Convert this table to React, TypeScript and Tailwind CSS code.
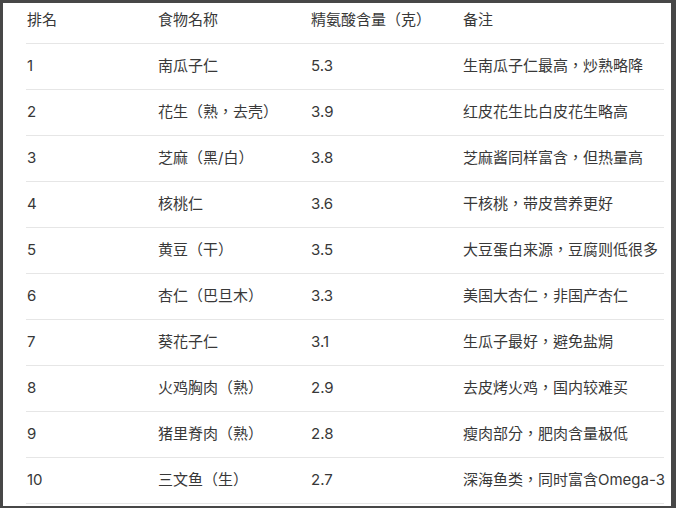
import React from 'react';

const rows = [
  ['1', '南瓜子仁', '5.3', '生南瓜子仁最高，炒熟略降'],
  ['2', '花生（熟，去壳）', '3.9', '红皮花生比白皮花生略高'],
  ['3', '芝麻（黑/白）', '3.8', '芝麻酱同样富含，但热量高'],
  ['4', '核桃仁', '3.6', '干核桃，带皮营养更好'],
  ['5', '黄豆（干）', '3.5', '大豆蛋白来源，豆腐则低很多'],
  ['6', '杏仁（巴旦木）', '3.3', '美国大杏仁，非国产杏仁'],
  ['7', '葵花子仁', '3.1', '生瓜子最好，避免盐焗'],
  ['8', '火鸡胸肉（熟）', '2.9', '去皮烤火鸡，国内较难买'],
  ['9', '猪里脊肉（熟）', '2.8', '瘦肉部分，肥肉含量极低'],
  ['10', '三文鱼（生）', '2.7', '深海鱼类，同时富含Omega-3'],
];

const cols = 'grid grid-cols-[132px_153px_152px_1fr]';

const App = () => {
  return (
    <main
      className="h-[508px] w-[676px] overflow-hidden bg-white border-[#474747] border-l-[3px] border-t-[3px] border-r-[5px] border-b-[2px] text-[15px] text-[#383838]"
      style={{ fontFamily: 'Inter, "Noto Sans CJK TC", sans-serif' }}
    >
      <div className="pl-[23px] pr-[7px]">
        <div className={`${cols} h-[41px] pt-[7px] pb-[14px] leading-[20px] border-b border-[#e6e6e6] whitespace-nowrap`}>
          <div className="pl-px">排名</div>
          <div>食物名称</div>
          <div>精氨酸含量（克）</div>
          <div>备注</div>
        </div>
        {rows.map((r) => (
          <div key={r[0]} className={`${cols} h-[46px] items-center border-b border-[#e6e6e6] whitespace-nowrap`}>
            <div className="pl-px">{r[0]}</div>
            <div>{r[1]}</div>
            <div>{r[2]}</div>
            <div>{r[3]}</div>
          </div>
        ))}
      </div>
    </main>
  );
};

export default App;
